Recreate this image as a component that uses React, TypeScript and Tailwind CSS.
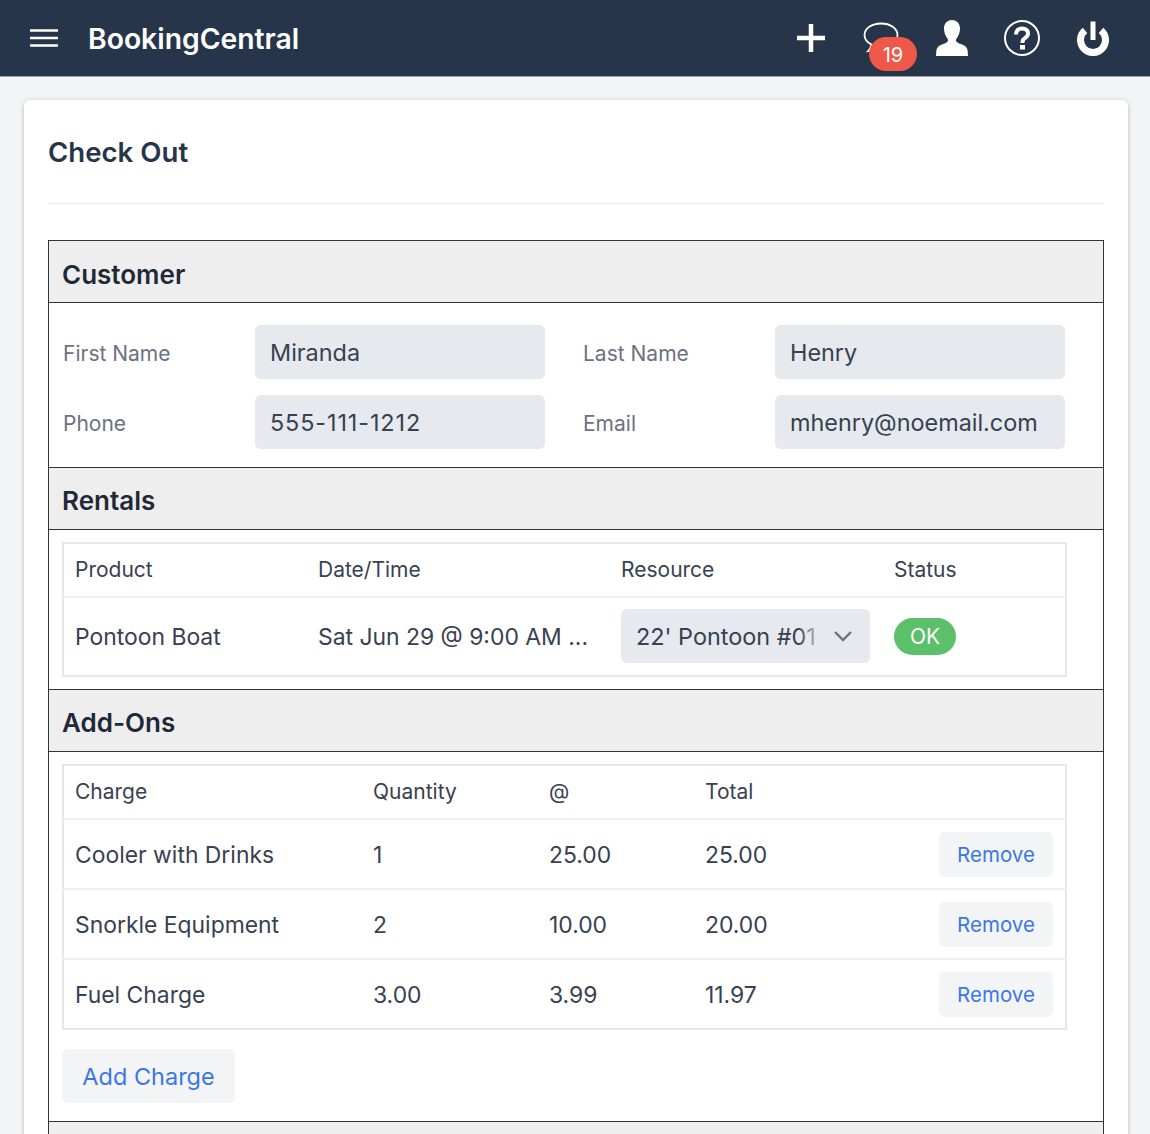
import React from "react";

const Hamburger = () => (
  <svg width="28" height="18" viewBox="0 0 28 18" fill="none" stroke="#fff" strokeWidth="2.4">
    <path d="M0 1.500h28M0 9h28M0 16.500h28" />
  </svg>
);
const Plus = () => (
  <svg width="28" height="28" viewBox="0 0 28 28" fill="none" stroke="#fff" strokeWidth="4.5">
    <path d="M14 0v28M0 14h28" />
  </svg>
);
const Bubble = () => (
  <svg width="36" height="34" viewBox="0 0 36 34" fill="none" stroke="#fff" strokeWidth="1.8">
    <path d="M18 1.500C8.800 1.500 1.500 6.600 1.500 13c0 4 2.800 7.500 7 9.600-.4 2.200-1.600 4.400-3.400 6.400 3.600-.6 6.800-2.200 9-4.600 1.200.2 2.600.3 3.900.3 9.200 0 16.500-5.200 16.500-11.700S27.200 1.500 18 1.500z" />
  </svg>
);
const User = () => (
  <svg width="32" height="36" viewBox="0 0 32 36" fill="#fff">
    <path d="M16 0c5 0 8 3.600 8 8.600 0 4-1.600 7.600-3.400 9.800-.8 1-.8 2.600 0 3.400 1.400 1.400 3.600 2 6 3 3 1.200 4.600 3 5.100 6l.3 5.200H0l.3-5.200c.5-3 2.100-4.800 5.100-6 2.400-1 4.600-1.600 6-3 .8-.8.8-2.400 0-3.400C9.600 16.200 8 12.600 8 8.600 8 3.600 11 0 16 0z" />
  </svg>
);
const Help = () => (
  <svg width="36" height="36" viewBox="0 0 36 36" fill="none">
    <circle cx="18" cy="18" r="17" stroke="#fff" strokeWidth="2" />
    <path d="M12 14.500C12 10.500 14.500 8.500 18 8.500c3.800 0 6 2 6 5 0 2.500-1.500 3.500-3 4.600-1.500 1-2.500 2-2.500 4v.9" stroke="#fff" strokeWidth="4" />
    <rect x="16" y="25" width="5" height="4.500" fill="#fff" />
  </svg>
);
const Power = () => (
  <svg width="32" height="35" viewBox="0 0 32 35" fill="none" stroke="#fff">
    <path d="M8 9.400A12.500 12.500 0 1 0 24 9.400" strokeWidth="7" />
    <path d="M16 0.500V19" strokeWidth="5" />
  </svg>
);

const Header = ({ children, first }: { children?: React.ReactNode; first?: boolean }) => (
  <div className={`bg-[#eeeeee] border-b border-[#333333] flex items-center px-[13px] text-[26px] font-semibold text-[#1f2937] ${first ? "h-[62px] pt-[5px]" : "h-[63px] pt-[4px] border-t"}`}>
    {children}
  </div>
);

const Field = ({ label, value, wide }: { label: string; value: string; wide?: boolean }) => (
  <div className="flex items-center">
    <div className="w-[192px] pt-[3px] text-[21px] text-[#6b7280]">{label}</div>
    <div className={`w-[290px] h-[54px] bg-[#e6e9ed] rounded-[6px] flex items-center px-[15px] pt-[2px] text-[23.4px] text-[#374151] whitespace-nowrap overflow-hidden ${wide ? "tracking-[0.9px]" : ""}`}>
      {value}
    </div>
  </div>
);

const Remove = () => (
  <button className="w-[114px] h-[45px] pt-[3px] bg-[#f3f4f6] rounded-[6px] text-[20.5px] text-[#3b76e8]">Remove</button>
);

const addOns = [
  ["Cooler with Drinks", "1", "25.00", "25.00"],
  ["Snorkle Equipment", "2", "10.00", "20.00"],
  ["Fuel Charge", "3.00", "3.99", "11.97"],
];

export default function App() {
  return (
    <div className="h-[1134px] overflow-hidden bg-[#f3f4f6] font-['Inter',sans-serif] text-[#374151]">
      <nav className="h-[77px] bg-[#27354a] border-b border-[#9ca3af] flex items-center pl-[30px] pr-[41px]">
        <Hamburger />
        <div className="ml-[30px] pt-[2px] text-[28.3px] font-semibold text-white">BookingCentral</div>
        <div className="ml-auto flex items-center">
          <Plus />
          <div className="relative ml-[38px] mt-[1px]">
            <Bubble />
            <div className="absolute left-[6px] top-[15px] w-[48px] h-[34px] pt-[2px] rounded-full bg-[#ef5849] text-white text-[20px] flex items-center justify-center">19</div>
          </div>
          <div className="ml-[37px]"><User /></div>
          <div className="ml-[36px]"><Help /></div>
          <div className="ml-[37px] mt-[1px]"><Power /></div>
        </div>
      </nav>

      <main className="ml-[24px] mr-[22px] mt-[23px] bg-white rounded-[6px] shadow-[0_1px_4px_rgba(0,0,0,0.25)] px-[24px] pt-[24px] pb-[24px]">
        <h1 className="h-[56px] pt-[2px] flex items-center text-[27.6px] font-semibold text-[#27354a]">Check Out</h1>
        <div className="mt-[23px] h-[1px] bg-[#e5e7eb]"></div>

        <section className="mt-[36px] border border-[#333333]">
          <Header first>Customer</Header>
          <div className="px-[14px] pt-[22px] pb-[18px] grid grid-cols-[482px_482px] gap-x-[38px] gap-y-[16px]">
            <Field label="First Name" value="Miranda" />
            <Field label="Last Name" value="Henry" />
            <Field label="Phone" value="555-111-1212" wide />
            <Field label="Email" value="mhenry@noemail.com" />
          </div>

          <Header>Rentals</Header>
          <div className="px-[13px] pt-[12px] pb-[12px]">
            <table className="w-[1005px] table-fixed border-collapse border-2 border-[#e5e7eb] text-[#374151]">
              <colgroup>
                <col className="w-[243px]" />
                <col className="w-[303px]" />
                <col className="w-[273px]" />
                <col />
              </colgroup>
              <thead>
                <tr className="h-[54px] border-b-2 border-[#eef0f3] text-[21px]">
                  <th className="pl-[11px] pr-[12px] text-left font-normal">Product</th>
                  <th className="px-[12px] text-left font-normal">Date/Time</th>
                  <th className="px-[12px] text-left font-normal">Resource</th>
                  <th className="px-[12px] text-left font-normal">Status</th>
                </tr>
              </thead>
              <tbody>
                <tr className="h-[79px] text-[22.9px]">
                  <td className="pl-[11px] pr-[12px] pt-[1px]">Pontoon Boat</td>
                  <td className="px-[12px] pt-[1px] whitespace-nowrap">Sat Jun 29 @ 9:00 AM ...</td>
                  <td className="px-[12px]">
                    <div className="relative w-[249px] h-[54px] mt-[-2px] bg-[#e6e9ed] rounded-[6px] flex items-center pl-[15px] pt-[2px] text-[23.4px] overflow-hidden whitespace-nowrap">
                      22' Pontoon #01
                      <div className="absolute right-0 top-0 h-full w-[72px] bg-gradient-to-r from-transparent to-[#e6e9ed] to-[35%]"></div>
                      <svg className="absolute right-[18px] top-[22px]" width="18" height="11" viewBox="0 0 18 11" fill="none" stroke="#6b7280" strokeWidth="2.400">
                        <path d="M1 1l8 8 8-8" />
                      </svg>
                    </div>
                  </td>
                  <td className="px-[12px]">
                    <div className="w-[62px] h-[37px] pt-[1px] rounded-full bg-[#5cc06b] text-white text-[21px] flex items-center justify-center">OK</div>
                  </td>
                </tr>
              </tbody>
            </table>
          </div>

          <Header>Add-Ons</Header>
          <div className="px-[13px] pt-[12px] pb-[18px]">
            <table className="w-[1005px] table-fixed border-collapse border-2 border-[#e5e7eb]">
              <colgroup>
                <col className="w-[298px]" />
                <col className="w-[176px]" />
                <col className="w-[156px]" />
                <col />
              </colgroup>
              <thead>
                <tr className="h-[54px] border-b-2 border-[#eef0f3] text-[21px]">
                  <th className="pl-[11px] pr-[12px] text-left font-normal">Charge</th>
                  <th className="px-[12px] text-left font-normal">Quantity</th>
                  <th className="px-[12px] text-left font-normal">@</th>
                  <th className="px-[12px] text-left font-normal">Total</th>
                </tr>
              </thead>
              <tbody>
                {addOns.map((row, i) => (
                  <tr key={row[0]} className={`h-[70px] text-[22.9px] ${i < 2 ? "border-b-2 border-[#eef0f3]" : ""}`}>
                    <td className="pl-[11px] pr-[12px] pt-[2px]">{row[0]}</td>
                    <td className="px-[12px] pt-[2px]">{row[1]}</td>
                    <td className="px-[12px] pt-[2px]">{row[2]}</td>
                    <td className="px-[12px]">
                      <div className="flex items-center justify-between">
                        <span className="pt-[2px]">{row[3]}</span>
                        <Remove />
                      </div>
                    </td>
                  </tr>
                ))}
              </tbody>
            </table>
            <button className="mt-[19px] block w-[173px] h-[54px] pt-[2px] bg-[#f3f4f6] rounded-[6px] text-[23.5px] text-[#3b76e8]">Add Charge</button>
          </div>

          <Header />
        </section>
      </main>
    </div>
  );
}
